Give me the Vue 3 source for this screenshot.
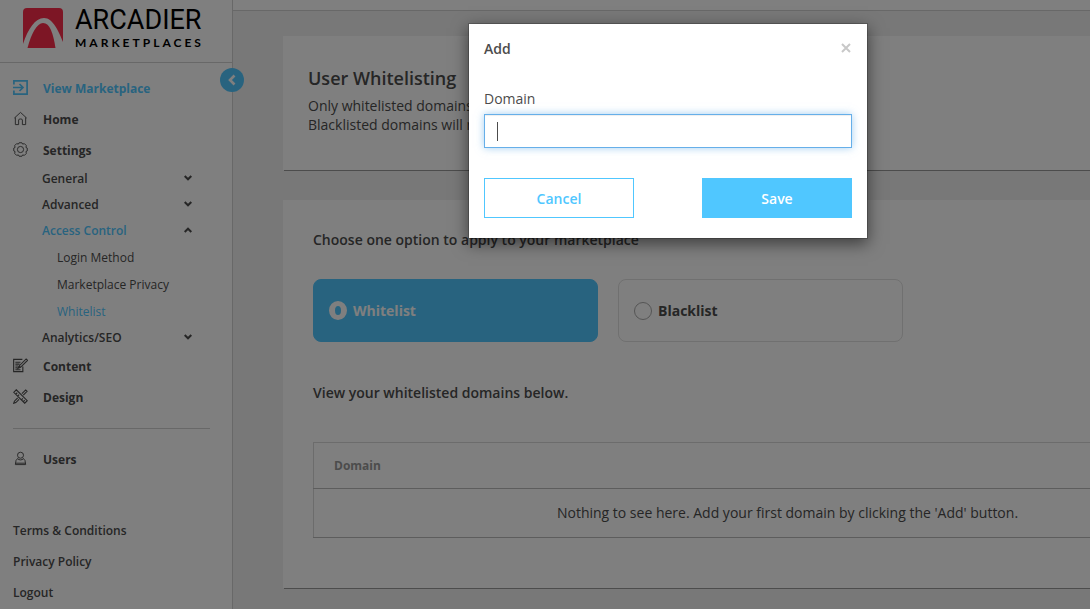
<script setup>
import { ref, onMounted } from 'vue'

const choice = ref('whitelist')
const domain = ref('')
const domainInput = ref(null)

const settings = [
  { label: 'General' },
  { label: 'Advanced' },
  { label: 'Access Control', open: true, children: ['Login Method', 'Marketplace Privacy', 'Whitelist'] },
  { label: 'Analytics/SEO' },
]
const footerLinks = ['Terms & Conditions', 'Privacy Policy', 'Logout']

onMounted(() => domainInput.value.focus())
</script>

<template>
  <div class="viewport">
    <div class="shell">
      <aside class="sidebar">
        <div class="brand">
          <svg class="brand-mark" viewBox="0 0 40 40" width="40" height="40" aria-hidden="true">
            <path fill="#fb2d4b" d="M4 0H36Q40 0 40 4V34C36 24 30 10 21 10C12 10 5 21 0 36V4Q0 0 4 0Z" />
            <path fill="#fb2d4b" d="M4.500 40C8 26 14 15 20 15C27 15 30 25 32.500 40Z" />
          </svg>
          <div class="brand-text">
            <span class="brand-name">ARCADIER</span>
            <span class="brand-sub">MARKETPLACES</span>
          </div>
        </div>
        <button class="collapse" type="button" aria-label="Collapse menu">
          <svg viewBox="0 0 10 12" width="10" height="12"><path d="M7.500 1.500L3 6l4.500 4.500" fill="none" stroke="#fff" stroke-width="2.600" /></svg>
        </button>

        <nav class="menu">
          <a class="item accent" href="#">
            <svg class="icon" viewBox="0 0 15 15"><path d="M.9 4.500V.9H14.100V14.100H.9V10.500M0 7.500H10M6.500 4L10 7.500L6.500 11" stroke-width="1.700" /></svg>
            View Marketplace
          </a>
          <a class="item" href="#">
            <svg class="icon" viewBox="0 0 16 16"><path d="M1.500 7.500L8 1.500L14.500 7.500M2.500 6.800V14.500H6V9.500Q6 8.500 8 8.500T10 9.500V14.500H13.500V6.800" /></svg>
            Home
          </a>
          <a class="item" href="#">
            <svg class="icon" viewBox="0 0 16 16"><circle cx="8" cy="8" r="3.300" /><path d="M6.500 .8H9.500L10.200 2.200L12.200 1.800L14.200 3.800L13.800 5.800L15.200 6.500V9.500L13.800 10.200L14.200 12.200L12.200 14.200L10.200 13.800L9.500 15.200H6.500L5.800 13.800L3.800 14.200L1.800 12.200L2.200 10.200L.8 9.500V6.500L2.200 5.800L1.800 3.800L3.800 1.800L5.800 2.200Z" /></svg>
            Settings
          </a>
          <template v-for="s in settings" :key="s.label">
            <a class="sub" :class="{ accent: s.open }" href="#">
              {{ s.label }}
              <svg class="chevron" viewBox="0 0 8 6" width="8" height="6"><path :d="s.open ? 'M.7 5L4 1.700L7.300 5' : 'M.7 1L4 4.300L7.300 1'" /></svg>
            </a>
            <a v-for="c in s.children" :key="c" class="leaf" :class="{ accent: c === 'Whitelist' }" href="#">{{ c }}</a>
          </template>
          <a class="item" href="#">
            <svg class="icon" viewBox="0 0 16 16"><path stroke-width="1.200" d="M10 1.500H.7V14.500H10.500V9M2.500 4.500H8M2.500 6.500H7M2.500 8.500H5.500M2.500 10.500H5M2.500 12.500H8M5.500 11L6.500 8.500L14 1L15.500 2.500L8 10ZM6.500 8.500L8 10" /></svg>
            Content
          </a>
          <a class="item" href="#">
            <svg class="icon" viewBox="0 0 16 16"><path stroke-width="1.200" d="M.8 3.500L3.500 .8L15.200 12.500L12.500 15.200ZM3 5.500L4.500 4M5 7.500L6.500 6M9 11.500L10.500 10M11 13.500L12.500 12M9.500 5L13.500 1L15 2.500L11 6.500M6.500 11L3 14.500L.8 15.200L1.500 13L5 9.500" /></svg>
            Design
          </a>
          <hr class="rule" />
          <a class="item" href="#">
            <svg class="icon" viewBox="0 0 16 16"><circle cx="8" cy="4.500" r="3.200" /><path d="M5.500 7.500Q2.500 9 2.500 14.500H13.500Q13.500 9 10.500 7.500M5.500 9L8 9.500L10.500 9M2.500 13H13.500" /></svg>
            Users
          </a>
          <div class="links">
            <a v-for="l in footerLinks" :key="l" class="plain" href="#">{{ l }}</a>
          </div>
        </nav>
      </aside>

      <main class="main">
        <div class="topbar"></div>
        <div class="content">
          <section class="card intro">
            <h1>User Whitelisting</h1>
            <p>Only whitelisted domains<br />Blacklisted domains will not</p>
          </section>

          <section class="card body">
            <h2>Choose one option to apply to your marketplace</h2>
            <div class="options">
              <label class="option" :class="{ selected: choice === 'whitelist' }">
                <input v-model="choice" type="radio" name="mode" value="whitelist" />
                Whitelist
              </label>
              <label class="option" :class="{ selected: choice === 'blacklist' }">
                <input v-model="choice" type="radio" name="mode" value="blacklist" />
                Blacklist
              </label>
            </div>
            <h2>View your whitelisted domains below.</h2>
            <table class="domains">
              <thead>
                <tr><th scope="col">Domain</th></tr>
              </thead>
              <tbody>
                <tr><td>Nothing to see here. Add your first domain by clicking the 'Add' button.</td></tr>
              </tbody>
            </table>
          </section>
        </div>
      </main>

      <div class="overlay">
        <form class="modal" role="dialog" aria-labelledby="dialog-title" @submit.prevent>
          <header class="modal-head">
            <h3 id="dialog-title">Add</h3>
            <button class="close" type="button" aria-label="Close">
              <svg viewBox="0 0 10 10" width="10" height="10"><path d="M1 1L9 9M9 1L1 9" stroke="#c8c8c8" stroke-width="2" /></svg>
            </button>
          </header>
          <label class="field-label" for="domain">Domain</label>
          <div class="field-wrap">
            <input id="domain" ref="domainInput" v-model="domain" class="field" type="text" />
            <span v-if="!domain" class="caret"></span>
          </div>
          <div class="actions">
            <button class="btn" type="button">Cancel</button>
            <button class="btn primary" type="submit">Save</button>
          </div>
        </form>
      </div>
    </div>
  </div>
</template>

<style>
body {
  background: #f0f0f0;
}
</style>

<style scoped>
.viewport {
  overflow: hidden;
  font-family: "Open Sans", "Noto Sans", sans-serif;
  font-size: 14px;
  line-height: 19px;
  color: #4c4c4c;
}
.viewport * {
  box-sizing: border-box;
}
.shell {
  position: relative;
  display: flex;
  min-width: 1336px;
  min-height: 100vh;
  background: #f0f0f0;
}
.sidebar {
  position: relative;
  width: 233px;
  flex: none;
  background: #fff;
  border-right: 1px solid #d0d0d0;
}
.brand {
  display: flex;
  gap: 12px;
  height: 63px;
  padding: 8px 0 0 23px;
  border-bottom: 1px solid #d0d0d0;
}
.brand-mark {
  flex: none;
}
.brand-text {
  display: flex;
  flex-direction: column;
  color: #000;
}
.brand-name {
  font-family: Roboto, sans-serif;
  font-size: 27px;
  line-height: 24px;
}
.brand-sub {
  font-family: Lato, sans-serif;
  font-size: 12px;
  font-weight: 700;
  line-height: 22px;
  letter-spacing: 3px;
}
.collapse {
  position: absolute;
  top: 68px;
  right: -12px;
  display: flex;
  align-items: center;
  justify-content: center;
  width: 24px;
  height: 24px;
  padding: 0;
  border: 0;
  border-radius: 50%;
  background: #50c7ff;
}
.menu {
  display: flex;
  flex-direction: column;
  padding: 10px 22px 0 13px;
}
.menu a {
  display: flex;
  align-items: center;
  color: #4c4c4c;
  text-decoration: none;
  font-size: 12px;
}
.menu .item {
  gap: 15px;
  height: 31px;
  font-weight: 700;
}
.menu a.accent {
  color: #50c7ff;
}
.icon {
  width: 15px;
  height: 15px;
  margin-bottom: 2px;
  fill: none;
  stroke: currentColor;
  stroke-width: 1;
}
.menu .sub {
  justify-content: space-between;
  height: 26px;
  padding: 0 18px 2px 29px;
  font-weight: 600;
}
.chevron {
  fill: none;
  stroke: #4c4c4c;
  stroke-width: 2;
}
.menu .leaf {
  height: 27px;
  padding-left: 44px;
}
.rule {
  width: 100%;
  margin: 15px 0;
  border: 0;
  border-top: 1px solid #d0d0d0;
}
.links {
  margin-top: 40px;
}
.menu .plain {
  height: 31px;
  font-weight: 600;
}
.main {
  flex: 1;
}
.topbar {
  height: 11px;
  background: #fff;
  border-bottom: 1px solid #d0d0d0;
}
.content {
  display: flex;
  flex-direction: column;
  gap: 30px;
  padding: 25px 44px 21px 50px;
}
.card {
  background: #fff;
  box-shadow: 1px 1px 0 #999;
}
.intro {
  padding: 30px 25px 36px;
}
h1,
h2,
h3,
p {
  margin: 0;
}
h1 {
  margin-bottom: 6px;
  font-size: 18px;
  line-height: 24px;
  font-weight: 600;
}
h2,
h3 {
  font-size: 14px;
  line-height: 20px;
  font-weight: 600;
}
.body {
  padding: 30px 30px 50px;
}
.options {
  display: flex;
  gap: 20px;
  margin: 29px 0 41px;
}
.option {
  display: flex;
  align-items: center;
  gap: 6px;
  width: 285px;
  height: 63px;
  padding: 0 15px;
  border: 1px solid #e0e0e0;
  border-radius: 8px;
  font-weight: 700;
}
.option input {
  appearance: none;
  width: 18px;
  height: 18px;
  margin: 0;
  border: 1px solid #aaa;
  border-radius: 50%;
}
.option.selected {
  background: #50c7ff;
  border-color: #50c7ff;
  color: #fff;
}
.option.selected input {
  height: 19px;
  border: solid #fff;
  border-width: 5px 6px;
}
.domains {
  width: 100%;
  margin-top: 39px;
  border: 1px solid #d8d8d8;
  border-collapse: collapse;
}
.domains th {
  height: 46px;
  padding: 0 20px;
  border-bottom: 1px solid #bbb;
  color: #999;
  font-size: 12px;
  font-weight: 700;
  text-align: left;
}
.domains td {
  height: 49px;
  padding: 0 20px 2px;
  border-bottom: 1px solid #bbb;
  text-align: center;
}
.overlay {
  position: absolute;
  inset: 0;
  padding-top: 23px;
  background: rgba(0, 0, 0, 0.5);
}
.modal {
  width: 400px;
  margin: 0 auto;
  padding: 15px 15px 20px;
  background: #fff;
  background-clip: padding-box;
  border: 1px solid rgba(0, 0, 0, 0.2);
  box-shadow: 0 5px 15px rgba(0, 0, 0, 0.5);
}
.modal-head {
  display: flex;
  align-items: center;
  justify-content: space-between;
  margin-bottom: 30px;
}
.close {
  display: flex;
  padding: 2px 1px 4px;
  border: 0;
  background: none;
}
.field-label {
  display: block;
  margin-bottom: 6px;
}
.field-wrap {
  position: relative;
}
.field {
  display: block;
  width: 100%;
  height: 34px;
  padding: 6px 12px;
  border: 1px solid #66afe9;
  outline: 0;
  box-shadow: inset 0 1px 1px rgba(0, 0, 0, 0.07), 0 0 8px rgba(102, 175, 233, 0.6);
  font: inherit;
  color: #4c4c4c;
}
.field:placeholder-shown,
.field {
  caret-color: transparent;
}
.caret {
  position: absolute;
  top: 8px;
  left: 13px;
  width: 1px;
  height: 19px;
  background: #4c4c4c;
  pointer-events: none;
}
.actions {
  display: flex;
  justify-content: space-between;
  margin-top: 30px;
}
.btn {
  width: 150px;
  height: 40px;
  border: 1px solid #50c7ff;
  background: #fff;
  color: #50c7ff;
  font: inherit;
  font-weight: 600;
}
.btn.primary {
  background: #50c7ff;
  color: #fff;
}
</style>
